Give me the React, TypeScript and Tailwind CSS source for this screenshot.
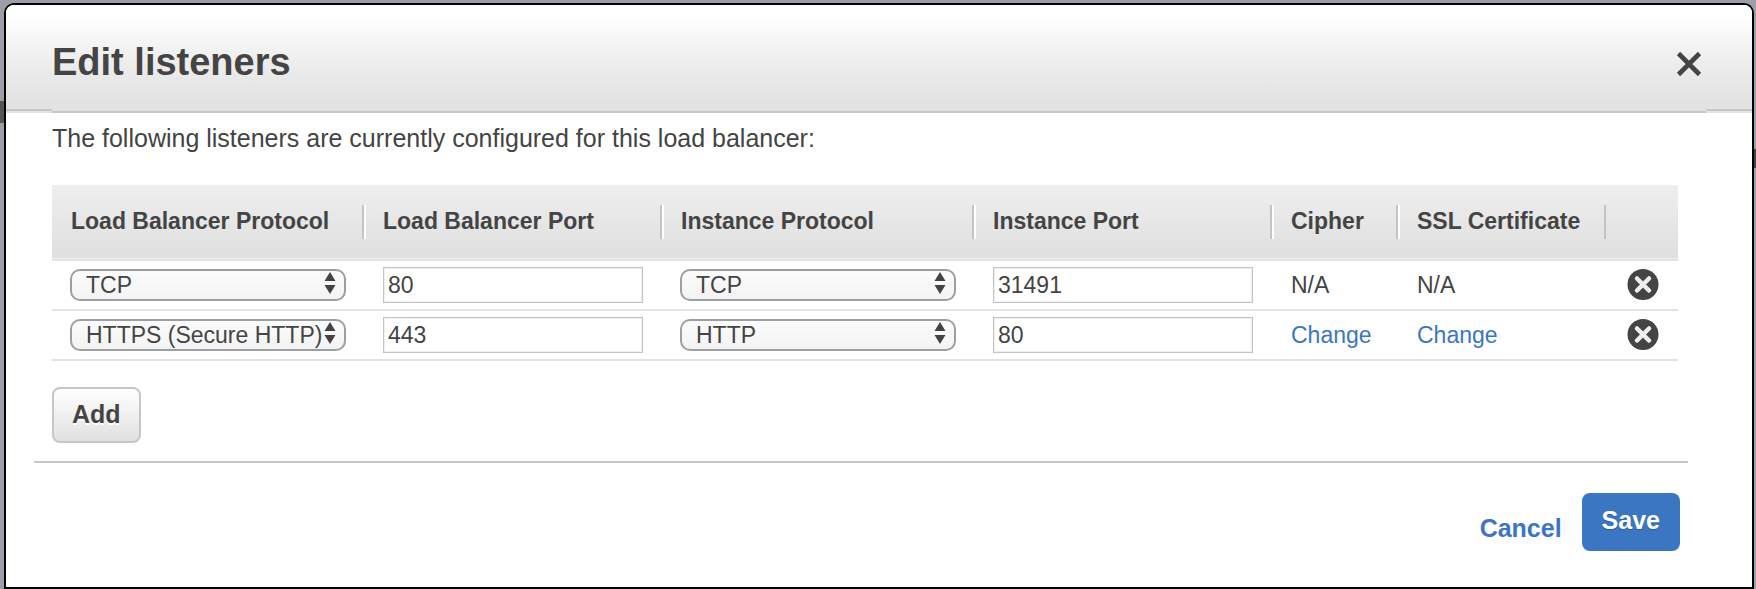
import React, { useState } from "react";

type Listener = {
  id: number;
  protocol: string;
  port: string;
  instanceProtocol: string;
  instancePort: string;
  secure: boolean;
};

const INITIAL: Listener[] = [
  { id: 1, protocol: "TCP", port: "80", instanceProtocol: "TCP", instancePort: "31491", secure: false },
  { id: 2, protocol: "HTTPS (Secure HTTP)", port: "443", instanceProtocol: "HTTP", instancePort: "80", secure: true },
];

const PROTOCOLS = ["HTTP", "HTTPS (Secure HTTP)", "TCP", "SSL (Secure TCP)"];

const COLUMNS = [
  { label: "Load Balancer Protocol", width: "w-[312px]" },
  { label: "Load Balancer Port", width: "w-[298px]" },
  { label: "Instance Protocol", width: "w-[312px]" },
  { label: "Instance Port", width: "w-[298px]" },
  { label: "Cipher", width: "w-[126px]" },
  { label: "SSL Certificate", width: "w-[208px]" },
];

function ProtocolSelect({ label, value }: { label: string; value: string }) {
  return (
    <div className="relative">
      <select
        aria-label={label}
        defaultValue={value}
        className="block h-8 w-full appearance-none rounded-[10px] border-2 border-[#9b9fa5] bg-linear-to-b from-[#fbfbfb] to-[#f3f3f3] pl-3.5 text-[23px] leading-7 text-[#444]"
      >
        {PROTOCOLS.map((p) => (
          <option key={p}>{p}</option>
        ))}
      </select>
      <svg
        viewBox="0 0 12 22"
        className="pointer-events-none absolute top-[3px] right-[10px] h-[22px] w-3 fill-[#444]"
        aria-hidden="true"
      >
        <path d="M6 0 11.5 9H.5zM6 22 .5 13h11z" />
      </svg>
    </div>
  );
}

function PortInput({ label, value }: { label: string; value: string }) {
  return (
    <input
      type="text"
      aria-label={label}
      defaultValue={value}
      className="block h-9 w-full border border-[#c3c3c3] bg-white px-1 text-[23px] leading-8 text-[#444] shadow-[inset_0_0_0_1px_#eeeeee]"
    />
  );
}

function CellAction({ secure, label }: { secure: boolean; label: string }) {
  return secure ? (
    <a href="#" aria-label={label} className="text-[#3b76c3]">
      Change
    </a>
  ) : (
    <span>N/A</span>
  );
}

export default function App() {
  const [listeners, setListeners] = useState(INITIAL);

  const add = () =>
    setListeners((rows) => [
      ...rows,
      { id: Date.now(), protocol: "HTTP", port: "", instanceProtocol: "HTTP", instancePort: "", secure: false },
    ]);

  return (
    <div className="relative min-h-screen bg-[#9c9fa5] pt-[3px] pr-0.5 pl-1 font-['Liberation_Sans',Arial,sans-serif] text-[#444]">
      <div className="absolute top-[101px] left-0 h-[22px] w-1 bg-[#555]" />
      <div className="absolute top-[149px] right-0 h-[19px] w-0.5 bg-[#444]" />

      <section
        role="dialog"
        aria-labelledby="dialog-title"
        className="relative overflow-hidden rounded-t-[10px] border-2 border-black bg-white"
      >
        <header className="bg-linear-to-b from-white from-10% via-[#eeeeee] via-50% to-[#e2e2e2] to-90%">
          <div className="flex h-[104px] items-center justify-between px-[46px] pt-3">
            <h1 id="dialog-title" className="pb-0.5 text-[38px] leading-10 font-bold">
              Edit listeners
            </h1>
            <button type="button" aria-label="Close" className="mr-1 pt-0.5">
              <svg viewBox="0 0 26 26" className="h-[26px] w-[26px] stroke-[#444]" fill="none" aria-hidden="true">
                <path d="M2.5 2.5 23.5 23.5M23.5 2.5 2.5 23.5" strokeWidth="4.6" />
              </svg>
            </button>
          </div>
          <div className="flex h-1">
            <div className="w-[46px] border-t-2 border-[#c6c6c6]" />
            <div className="flex-1 border-b-2 border-[#c6c6c6]" />
            <div className="w-[46px] border-t-2 border-[#c6c6c6]" />
          </div>
        </header>

        <div className="pr-[74px] pl-[46px]">
          <p className="pt-[9px] text-[25px] leading-8">
            The following listeners are currently configured for this load balancer:
          </p>

          <table className="mt-[31px] w-full table-fixed border-collapse text-left text-[23px] leading-7">
            <thead>
              <tr className="border-b-2 border-[#e2e2e2] bg-linear-to-b from-[#eeeeee] to-[#dfdfdf]">
                {COLUMNS.map((c, i) => (
                  <th key={c.label} scope="col" className={`${c.width} p-0 py-5 font-bold whitespace-nowrap`}>
                    <div
                      className={`h-[34px] border-r-2 border-[#c3c3c3] pl-[19px] leading-8 ${
                        i < COLUMNS.length - 1 ? "shadow-[2px_0_0_#ffffff]" : ""
                      }`}
                    >
                      {c.label}
                    </div>
                  </th>
                ))}
                <th className="w-[72px] p-0" aria-label="Remove" />
              </tr>
            </thead>
            <tbody>
              {listeners.map((l) => (
                <tr key={l.id} className="h-[50px] border-b-2 border-[#e2e2e2]">
                  <td className="px-[18px] py-0">
                    <ProtocolSelect label="Load Balancer Protocol" value={l.protocol} />
                  </td>
                  <td className="px-[19px] py-0">
                    <PortInput label="Load Balancer Port" value={l.port} />
                  </td>
                  <td className="px-[18px] py-0">
                    <ProtocolSelect label="Instance Protocol" value={l.instanceProtocol} />
                  </td>
                  <td className="px-[19px] py-0">
                    <PortInput label="Instance Port" value={l.instancePort} />
                  </td>
                  <td className="py-0 pl-[19px]">
                    <CellAction secure={l.secure} label="Change cipher" />
                  </td>
                  <td className="py-0 pl-[19px]">
                    <CellAction secure={l.secure} label="Change SSL certificate" />
                  </td>
                  <td className="py-0 pl-[21px]">
                    <button
                      type="button"
                      aria-label="Remove listener"
                      className="block"
                      onClick={() => setListeners((rows) => rows.filter((r) => r.id !== l.id))}
                    >
                      <svg viewBox="0 0 32 32" className="h-8 w-8" aria-hidden="true">
                        <circle cx="16" cy="15.5" r="15.5" fill="#444" />
                        <path d="M10 9.5 22 21.5M22 9.5 10 21.5" stroke="#eee" strokeWidth="4.5" strokeLinecap="round" />
                      </svg>
                    </button>
                  </td>
                </tr>
              ))}
            </tbody>
          </table>

          <button
            type="button"
            onClick={add}
            className="mt-[26px] block h-14 rounded-lg border-2 border-[#c6c6c6] bg-linear-to-b from-white to-[#e0e0e0] px-[18px] pb-0.5 text-[25px] leading-8 font-bold [text-shadow:0_2px_0_#ffffff]"
          >
            Add
          </button>
        </div>

        <footer className="mt-[18px] mr-16 ml-7 flex items-center justify-end gap-5 border-t-2 border-[#c6c6c6] pt-[30px] pr-2 pb-9 text-[25px] leading-8 font-bold">
          <a href="#" className="pt-3 text-[#3b76c3]">
            Cancel
          </a>
          <button
            type="button"
            className="h-[58px] rounded-lg bg-[#3b76c3] px-5 pb-1 text-white [text-shadow:0_1px_0_#2a5a9a]"
          >
            Save
          </button>
        </footer>
      </section>
    </div>
  );
}
